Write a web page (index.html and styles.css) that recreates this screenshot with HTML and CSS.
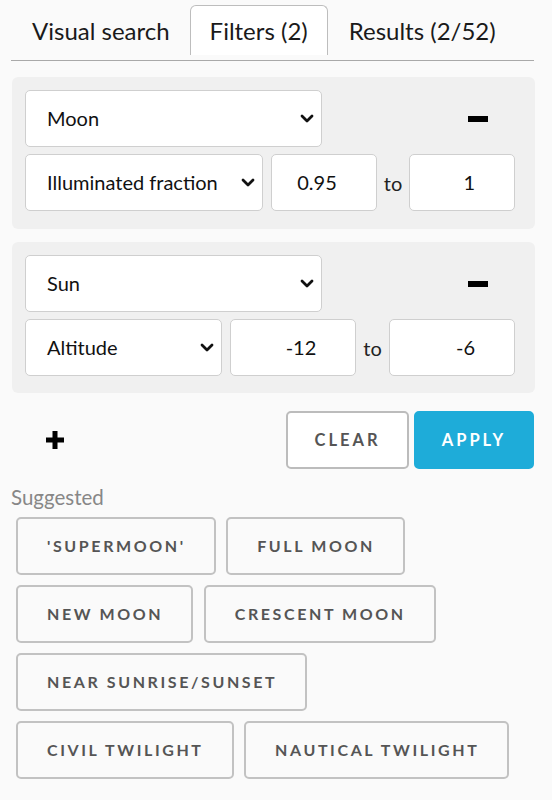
FILE: index.html
```html
<!DOCTYPE html>
<html>
<head>
<meta charset="utf-8">
<link rel="stylesheet" href="styles.css">
</head>
<body>
<div class="tabbar">
  <div class="tab">Visual search</div>
  <div class="tab tab-active">Filters (2)</div>
  <div class="tab">Results (2/52)</div>
</div>

<div class="panel">
  <div class="row">
    <div class="select select-body">Moon<svg class="chev" viewBox="0 0 14 9"><path d="M2 2l5 5 5-5" fill="none" stroke="#111" stroke-width="2.8" stroke-linecap="round" stroke-linejoin="round"/></svg></div>
    <div class="remove"><span class="minus"></span></div>
  </div>
  <div class="row row-second">
    <div class="select select-wide">Illuminated fraction<svg class="chev" viewBox="0 0 14 9"><path d="M2 2l5 5 5-5" fill="none" stroke="#111" stroke-width="2.8" stroke-linecap="round" stroke-linejoin="round"/></svg></div>
    <div class="num">0.95</div>
    <span class="to">to</span>
    <div class="num">1</div>
  </div>
</div>

<div class="panel panel-next">
  <div class="row">
    <div class="select select-body">Sun<svg class="chev" viewBox="0 0 14 9"><path d="M2 2l5 5 5-5" fill="none" stroke="#111" stroke-width="2.8" stroke-linecap="round" stroke-linejoin="round"/></svg></div>
    <div class="remove"><span class="minus"></span></div>
  </div>
  <div class="row row-second">
    <div class="select select-narrow">Altitude<svg class="chev" viewBox="0 0 14 9"><path d="M2 2l5 5 5-5" fill="none" stroke="#111" stroke-width="2.8" stroke-linecap="round" stroke-linejoin="round"/></svg></div>
    <div class="num">-12</div>
    <span class="to">to</span>
    <div class="num">-6</div>
  </div>
</div>

<div class="actions">
  <div class="add"><svg viewBox="0 0 22 22" class="plus"><path d="M11 2v18M2 11h18" stroke="#000" stroke-width="5"/></svg></div>
  <div class="btn btn-clear">CLEAR</div>
  <div class="btn btn-apply">APPLY</div>
</div>

<div class="suggested">Suggested</div>
<div class="chips">
  <div class="chip">'SUPERMOON'</div>
  <div class="chip">FULL MOON</div>
  <div class="chip">NEW MOON</div>
  <div class="chip">CRESCENT MOON</div>
  <div class="chip">NEAR SUNRISE/SUNSET</div>
  <div class="chip chip-break"></div>
  <div class="chip">CIVIL TWILIGHT</div>
  <div class="chip">NAUTICAL TWILIGHT</div>
</div>
</body>
</html>
```

FILE: styles.css
```css
* { box-sizing: border-box; }
html, body {
  margin: 0;
  padding: 0;
  background: #fafafa;
  font-family: Lato, "Open Sans", sans-serif;
  color: #111;
}
.tabbar {
  display: flex;
  margin: 0 18px 0 11px;
  padding-top: 5px;
  padding-bottom: 5px;
  border-bottom: 1px solid #a9a9a9;
}
.tab {
  height: 50px;
  padding: 0 19px 0 20px;
  font-size: 24px;
  line-height: 50px;
  color: #1a1a1a;
  border: 1px solid transparent;
  border-bottom: none;
  border-radius: 6px 6px 0 0;
  white-space: nowrap;
}
.tab-active {
  background: #fff;
  border-color: #bdbdbd;
  padding: 0 19px;
}
.panel {
  margin: 16px 17px 0 12px;
  padding: 13px 20px 18px 13px;
  background: #f0f0f0;
  border-radius: 6px;
}
.panel-next { margin-top: 13px; padding-bottom: 17px; }
.row {
  display: flex;
  align-items: center;
}
.row-second { margin-top: 7px; }
.select {
  position: relative;
  height: 57px;
  background: #fff;
  border: 1px solid #cfcfcf;
  border-radius: 5px;
  font-size: 20px;
  line-height: 55px;
  padding-left: 21px;
  flex: none;
}
.chev {
  position: absolute;
  right: 7px;
  top: 23px;
  width: 14px;
  height: 9px;
}
.select-body { width: 297px; }
.select-wide { width: 238px; margin-right: 8px; }
.select-narrow { width: 197px; margin-right: 8px; }
.remove {
  margin-left: auto;
  width: 75px;
  height: 57px;
  display: flex;
  align-items: center;
  justify-content: center;
}
.minus {
  display: block;
  width: 20px;
  height: 6px;
  background: #000;
}
.num {
  flex: 1;
  height: 57px;
  background: #fff;
  border: 1px solid #cfcfcf;
  border-radius: 5px;
  font-size: 20px;
  line-height: 55px;
  text-align: right;
  padding-right: 39px;
}
.to {
  font-size: 20px;
  padding: 0 7px;
  color: #222;
}
.actions {
  display: flex;
  align-items: center;
  margin: 18px 18px 0 12px;
}
.add {
  margin-left: 32px;
  width: 22px;
  height: 22px;
  margin-right: auto;
}
.plus { display: block; width: 22px; height: 22px; }
.btn {
  height: 58px;
  border-radius: 5px;
  font-size: 16.5px;
  font-weight: 700;
  letter-spacing: 3px;
  line-height: 54px;
  text-align: center;
}
.btn-clear {
  width: 123px;
  border: 2px solid #bcbcbc;
  color: #555;
  background: #fff;
}
.btn-apply {
  width: 120px;
  margin-left: 5px;
  background: #1eacd9;
  color: #fff;
  border: 2px solid #1eacd9;
}
.suggested {
  margin: 16px 0 0 11px;
  font-size: 20.5px;
  color: #878787;
  line-height: 24px;
}
.chips {
  display: flex;
  flex-wrap: wrap;
  padding: 3px 0 0 11px;
}
.chip {
  height: 58px;
  margin: 5px 5.5px 5px 5px;
  padding: 0 28px 0 29px;
  border: 2px solid #c2c2c2;
  border-radius: 5px;
  font-size: 16px;
  font-weight: 700;
  letter-spacing: 2.6px;
  line-height: 54px;
  color: #555;
  white-space: nowrap;
}
.chip-break {
  flex-basis: 100%;
  height: 0;
  margin: 0;
  padding: 0;
  border: none;
}
```
